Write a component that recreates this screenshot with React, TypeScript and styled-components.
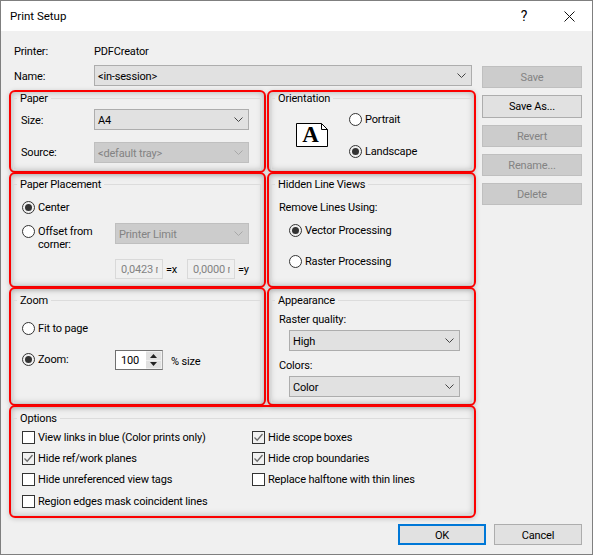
import styled, { createGlobalStyle } from "styled-components";
import { ReactNode } from "react";

const GlobalStyle = createGlobalStyle`
  html, body {
    margin: 0;
    padding: 0;
    background: #f0f0f0;
  }
  * {
    box-sizing: border-box;
  }
`;

const FONT = `Roboto, "Noto Sans", sans-serif`;

const Window = styled.div`
  width: 593px;
  height: 555px;
  display: flex;
  flex-direction: column;
  border: 1px solid #7f7f7f;
  background: #f0f0f0;
  color: #000;
  font-family: ${FONT};
  font-size: 11px;
  letter-spacing: -0.17px;
  line-height: 16px;
`;

const TitleBar = styled.header`
  height: 30px;
  flex: none;
  display: flex;
  align-items: center;
  background: #fff;
  padding-left: 9px;
  font-size: 11.5px;
  letter-spacing: 0;
`;

const TitleText = styled.span`
  flex: 1;
`;

const HelpMark = styled.span`
  width: 80px;
  text-align: center;
  font-size: 14px;
`;

const CloseMark = styled.svg`
  width: 11px;
  height: 11px;
  margin: 0 17px 0 0;
`;

const Main = styled.div`
  flex: none;
  display: flex;
  padding-left: 8px;
`;

const LeftColumn = styled.div`
  width: 467px;
`;

const Header = styled.div`
  display: grid;
  grid-template-columns: 80px 378px;
  grid-template-rows: 20px 21px;
  row-gap: 4px;
  align-items: center;
  padding: 10px 0 4px 5px;
`;

const Panels = styled.div`
  display: grid;
  grid-template-columns: 257px 209px;
  grid-template-rows: 82px 115px 118px 112px;
  column-gap: 1px;
`;

const Panel = styled.section<{ $right?: boolean; $top?: number; $wide?: boolean }>`
  display: flex;
  grid-column: ${(p) => (p.$wide ? "1 / span 2" : "auto")};
  height: calc(100% + 1px);
  border: 2px solid #fb0000;
  border-radius: 6px;
  padding: ${(p) => p.$top ?? 0}px ${(p) => (p.$right || p.$wide ? 1 : 3)}px 1px 2px;
  box-shadow: inset 0 0 7px rgba(0, 0, 0, 0.28), 0 1px 5px rgba(0, 0, 0, 0.18);
`;

const Group = styled.fieldset`
  flex: 1;
  min-width: 0;
  margin: 0;
  padding: 0;
  border: 1px solid #dcdcdc;
`;

const GroupTitle = styled.legend`
  margin-left: 3px;
  padding: 1px 3px 0;
  line-height: 11px;
`;

const Label = styled.span`
  display: inline-block;
  padding-top: 2px;
`;

const PaperGrid = styled.div`
  display: grid;
  grid-template-columns: 73px 155px;
  grid-template-rows: 21px 21px;
  row-gap: 12px;
  align-items: center;
  padding: 5px 0 0 7px;
`;

const OrientationRow = styled.div`
  display: flex;
  align-items: center;
  padding: 7px 0 0 24px;
`;

const PageIcon = styled.svg`
  width: 32px;
  height: 24px;
  margin: 0 21px 0 0;
  flex: none;
`;

const RadioStack = styled.div<{ $gap: number; $indent?: number }>`
  display: flex;
  flex-direction: column;
  gap: ${(p) => p.$gap}px;
  margin-left: ${(p) => p.$indent ?? 0}px;
`;

const PlacementGrid = styled.div`
  display: grid;
  grid-template-columns: 93px 134px;
  grid-template-rows: 24px 21px auto;
  padding: 9px 0 0 8px;
`;

const SpanAll = styled.div`
  grid-column: 1 / span 2;
`;

const Offsets = styled.div`
  grid-column: 2;
  display: flex;
  align-items: center;
  height: 20px;
  margin-top: 15px;
`;

const OffsetInput = styled.input`
  width: 48px;
  height: 20px;
  flex: none;
  border: 1px solid #d9d9d9;
  background: #f0f0f0;
  color: #838383;
  font: inherit;
  letter-spacing: inherit;
  padding: 1px 4px 0 5px;
`;

const OffsetLabel = styled.span`
  width: 24px;
  flex: none;
  padding: 1px 0 0 3px;
`;

const ZoomBody = styled.div`
  display: flex;
  flex-direction: column;
  gap: 14px;
  padding: 14px 0 0 8px;
`;

const ZoomRow = styled.div`
  display: flex;
  align-items: flex-start;
`;

const ZoomRadioCell = styled.div`
  width: 93px;
  margin-top: 1px;
`;

const Spinner = styled.div`
  width: 48px;
  height: 20px;
  display: flex;
  border: 1px solid #a6a6a6;
  background: #f0f0f0;
  border-left-color: #707070;
  border-top-color: #707070;
  border-bottom-color: #707070;
`;

const SpinnerValue = styled.span`
  width: 30px;
  background: #fff;
  padding: 1px 0 0 5px;
  line-height: 18px;
`;

const SpinButtons = styled.div`
  flex: 1;
  display: flex;
  flex-direction: column;
  gap: 1px;
  padding: 1px 1px 1px 0;
`;

const SpinButton = styled.div`
  flex: 1;
  background: #e1e1e1;
  display: flex;
  align-items: center;
  justify-content: center;
`;

const Suffix = styled.span`
  margin: 4px 0 0 8px;
`;

const HiddenBody = styled.div`
  padding: 9px 0 0 7px;
`;

const RemoveTitle = styled.div`
  padding-top: 1px;
  margin-bottom: 6px;
`;

const AppearanceBody = styled.div`
  padding: 5px 0 0 7px;
`;

const FieldTitle = styled.div`
  padding-top: 1px;
  margin-bottom: 2px;
`;

const IndentedSelect = styled.div`
  width: 171px;
  margin: 0 0 6px 10px;
`;

const OptionsGrid = styled.div`
  display: grid;
  grid-template-columns: 230px 1fr;
  grid-auto-rows: 16px;
  row-gap: 5px;
  padding: 5px 0 0 8px;

  & > :nth-child(7) {
    margin-top: 1px;
  }
`;

const Choice = styled.div`
  display: flex;
  align-items: center;
  gap: 3px;
  height: 16px;
  white-space: nowrap;
`;

const OffsetChoice = styled.div`
  display: flex;
  align-items: flex-start;
  gap: 3px;
  line-height: 13px;
  padding-top: 2px;
`;

const RadioMark = styled.span<{ $on?: boolean }>`
  width: 13px;
  height: 13px;
  flex: none;
  display: flex;
  align-items: center;
  justify-content: center;
  border: 1px solid #333;
  border-radius: 50%;
  background: ${(p) => (p.$on ? "#f0f0f0" : "#fff")};

  &::after {
    content: "";
    width: 7px;
    height: 7px;
    border-radius: 50%;
    background: ${(p) => (p.$on ? "#333" : "transparent")};
  }
`;

const BoxMark = styled.span<{ $on?: boolean }>`
  width: 13px;
  height: 13px;
  flex: none;
  display: flex;
  border: 1px solid #333;
  background: ${(p) => (p.$on ? "#f0f0f0" : "#fff")};
`;

const SelectBox = styled.div<{ $off?: boolean }>`
  height: 21px;
  display: flex;
  align-items: center;
  justify-content: space-between;
  padding: 0 5px 0 3px;
  border: 1px solid ${(p) => (p.$off ? "#bfbfbf" : "#adadad")};
  background: ${(p) => (p.$off ? "#cccccc" : "#e1e1e1")};
  color: ${(p) => (p.$off ? "#838383" : "#000")};
`;

const Chevron = styled.svg`
  width: 9px;
  height: 5px;
  flex: none;
`;

const ButtonColumn = styled.div`
  width: 100px;
  margin-left: 6px;
  padding-top: 35px;
  display: flex;
  flex-direction: column;
  gap: 7px;
`;

const DialogButton = styled.div<{ $off?: boolean; $primary?: boolean }>`
  height: ${(p) => (p.$primary !== undefined ? "21px" : "22.25px")};
  display: flex;
  align-items: center;
  justify-content: center;
  padding-top: 2px;
  border: ${(p) => (p.$primary ? "2px solid #0078d7" : `1px solid ${p.$off ? "#bfbfbf" : "#adadad"}`)};
  background: ${(p) => (p.$off ? "#cccccc" : "#e1e1e1")};
  color: ${(p) => (p.$off ? "#838383" : "#000")};
`;

const Footer = styled.footer`
  display: flex;
  justify-content: flex-end;
  gap: 8px;
  padding: 7px 10px 0 0;
`;

const FooterSlot = styled.div`
  width: 88px;
`;

const Radio = ({ on, children }: { on?: boolean; children: ReactNode }) => (
  <Choice>
    <RadioMark $on={on} />
    <Label>{children}</Label>
  </Choice>
);

const Check = ({ on, children }: { on?: boolean; children: ReactNode }) => (
  <Choice>
    <BoxMark $on={on}>
      {on && (
        <svg width="11" height="11" viewBox="0 0 11 11">
          <path d="M1.5 5.5 L4.2 8.2 L9.5 2" fill="none" stroke="#6a6a6a" strokeWidth="1.3" />
        </svg>
      )}
    </BoxMark>
    <Label>{children}</Label>
  </Choice>
);

const Select = ({ value, off }: { value: string; off?: boolean }) => (
  <SelectBox $off={off}>
    <Label>{value}</Label>
    <Chevron viewBox="0 0 9 5">
      <path d="M0.5 0.5 L4.5 4.5 L8.5 0.5" fill="none" stroke={off ? "#a8a8a8" : "#444"} />
    </Chevron>
  </SelectBox>
);

const App = () => {
  return (
    <>
      <GlobalStyle />
      <Window>
        <TitleBar>
          <TitleText>Print Setup</TitleText>
          <HelpMark>?</HelpMark>
          <CloseMark viewBox="0 0 11 11">
            <path d="M0.5 0.5 L10.5 10.5 M10.5 0.5 L0.5 10.5" stroke="#111" fill="none" />
          </CloseMark>
        </TitleBar>

        <Main>
          <LeftColumn>
            <Header>
              <Label>Printer:</Label>
              <Label>PDFCreator</Label>
              <Label>Name:</Label>
              <Select value="<in-session>" />
            </Header>

            <Panels>
              <Panel>
                <Group>
                  <GroupTitle>Paper</GroupTitle>
                  <PaperGrid>
                    <Label>Size:</Label>
                    <Select value="A4" />
                    <span>Source:</span>
                    <Select value="<default tray>" off />
                  </PaperGrid>
                </Group>
              </Panel>

              <Panel $right>
                <Group>
                  <GroupTitle>Orientation</GroupTitle>
                  <OrientationRow>
                    <PageIcon viewBox="0 0 32 24">
                      <path d="M0.5 0.5 H25.5 L31.5 6.5 V23.5 H0.5 Z" fill="#fff" stroke="#000" />
                      <path d="M25.5 0.5 V6.5 H31.5" fill="none" stroke="#000" />
                      <text
                        x="14.5"
                        y="19"
                        textAnchor="middle"
                        fontFamily={`"Liberation Serif", serif`}
                        fontWeight="bold"
                        fontSize="23"
                      >
                        A
                      </text>
                    </PageIcon>
                    <RadioStack $gap={16}>
                      <Radio>Portrait</Radio>
                      <Radio on>Landscape</Radio>
                    </RadioStack>
                  </OrientationRow>
                </Group>
              </Panel>

              <Panel $top={4}>
                <Group>
                  <GroupTitle>Paper Placement</GroupTitle>
                  <PlacementGrid>
                    <SpanAll>
                      <Radio on>Center</Radio>
                    </SpanAll>
                    <OffsetChoice>
                      <RadioMark />
                      <span>
                        Offset from
                        <br />
                        corner:
                      </span>
                    </OffsetChoice>
                    <Select value="Printer Limit" off />
                    <Offsets>
                      <OffsetInput disabled value="0,0423 m" readOnly />
                      <OffsetLabel>=x</OffsetLabel>
                      <OffsetInput disabled value="0,0000 m" readOnly />
                      <OffsetLabel>=y</OffsetLabel>
                    </Offsets>
                  </PlacementGrid>
                </Group>
              </Panel>

              <Panel $right $top={4}>
                <Group>
                  <GroupTitle>Hidden Line Views</GroupTitle>
                  <HiddenBody>
                    <RemoveTitle>Remove Lines Using:</RemoveTitle>
                    <RadioStack $gap={15} $indent={10}>
                      <Radio on>Vector Processing</Radio>
                      <Radio>Raster Processing</Radio>
                    </RadioStack>
                  </HiddenBody>
                </Group>
              </Panel>

              <Panel $top={5}>
                <Group>
                  <GroupTitle>Zoom</GroupTitle>
                  <ZoomBody>
                    <Radio>Fit to page</Radio>
                    <ZoomRow>
                      <ZoomRadioCell>
                        <Radio on>Zoom:</Radio>
                      </ZoomRadioCell>
                      <Spinner>
                        <SpinnerValue>100</SpinnerValue>
                        <SpinButtons>
                          <SpinButton>
                            <svg width="7" height="4" viewBox="0 0 7 4">
                              <path d="M3.5 0 L7 4 H0 Z" fill="#222" />
                            </svg>
                          </SpinButton>
                          <SpinButton>
                            <svg width="7" height="4" viewBox="0 0 7 4">
                              <path d="M0 0 H7 L3.5 4 Z" fill="#222" />
                            </svg>
                          </SpinButton>
                        </SpinButtons>
                      </Spinner>
                      <Suffix>% size</Suffix>
                    </ZoomRow>
                  </ZoomBody>
                </Group>
              </Panel>

              <Panel $right $top={5}>
                <Group>
                  <GroupTitle>Appearance</GroupTitle>
                  <AppearanceBody>
                    <FieldTitle>Raster quality:</FieldTitle>
                    <IndentedSelect>
                      <Select value="High" />
                    </IndentedSelect>
                    <FieldTitle>Colors:</FieldTitle>
                    <IndentedSelect>
                      <Select value="Color" />
                    </IndentedSelect>
                  </AppearanceBody>
                </Group>
              </Panel>

              <Panel $wide $top={5}>
                <Group>
                  <GroupTitle>Options</GroupTitle>
                  <OptionsGrid>
                    <Check>View links in blue (Color prints only)</Check>
                    <Check on>Hide scope boxes</Check>
                    <Check on>Hide ref/work planes</Check>
                    <Check on>Hide crop boundaries</Check>
                    <Check>Hide unreferenced view tags</Check>
                    <Check>Replace halftone with thin lines</Check>
                    <Check>Region edges mask coincident lines</Check>
                  </OptionsGrid>
                </Group>
              </Panel>
            </Panels>
          </LeftColumn>

          <ButtonColumn>
            <DialogButton $off>Save</DialogButton>
            <DialogButton>Save As...</DialogButton>
            <DialogButton $off>Revert</DialogButton>
            <DialogButton $off>Rename...</DialogButton>
            <DialogButton $off>Delete</DialogButton>
          </ButtonColumn>
        </Main>

        <Footer>
          <FooterSlot>
            <DialogButton $primary>OK</DialogButton>
          </FooterSlot>
          <FooterSlot>
            <DialogButton $primary={false}>Cancel</DialogButton>
          </FooterSlot>
        </Footer>
      </Window>
    </>
  );
};

export default App;
